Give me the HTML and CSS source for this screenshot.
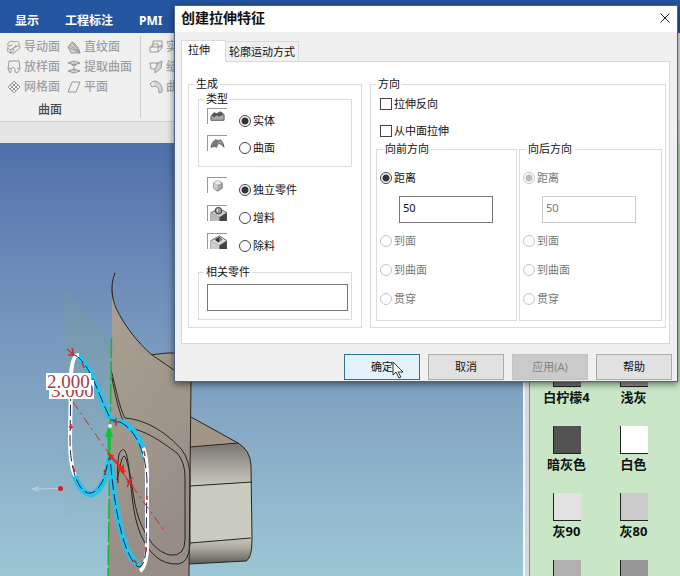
FILE: index.html
```html
<!DOCTYPE html>
<html lang="zh-CN">
<head>
<meta charset="utf-8">
<title>创建拉伸特征</title>
<link rel="stylesheet" href="styles.css">
</head>
<body>
<div class="app">
  <nav class="menubar">
    <a href="#">显示</a>
    <a href="#">工程标注</a>
    <a href="#">PMI</a>
  </nav>

  <div class="ribbon">
    <section class="ribbon-group">
      <div class="tools">
        <button class="tool" disabled><svg viewBox="0 0 14 14"><path d="M5 5C-1 6-1 11 3 13c3 0 4-4 4-4M1 6C0 2 4 0 7 2M1 8c1 3 4 1 6 0s6-4 6-1-4 3-5 5-3 1-5 1M7 2c4-2 6 1 5 3M3 12c1-4 6-4 6-7"/></svg>导动面</button>
        <button class="tool" disabled><svg viewBox="0 0 14 14"><path class="shade" d="M1 7l4-5c4 2 7 6 8 11H4z"/><path d="M1 7l4-5c4 2 7 6 8 11H4zM1 7l12 6M3 5l10 8M5 2l8 11"/></svg>直纹面</button>
        <button class="tool" disabled><svg viewBox="0 0 14 14"><path d="M2 1h10l1 8-3 4-2-1c1-6-5-6-4 0l-1 1-2-4zM1 9l3-1M13 9l-3-1"/></svg>放样面</button>
        <button class="tool" disabled><svg viewBox="0 0 14 14"><path class="shade" d="M7 1l6 2-6 2-6-2zM7 9l6 2-6 2-6-2z"/><path d="M7 1l6 2-6 2-6-2zM7 9l6 2-6 2-6-2zM7 3v8M5 6l2-2 2 2"/></svg>提取曲面</button>
        <button class="tool" disabled><svg viewBox="0 0 14 14"><path d="M7 1l6 6-6 6-6-6zM5 3l6 6M3 5l6 6M9 3L3 9M11 5l-6 6"/></svg>网格面</button>
        <button class="tool" disabled><svg viewBox="0 0 14 14"><path d="M5 2h8L9 12H1z"/></svg>平面</button>
      </div>
      <div class="group-name">曲面</div>
    </section>
    <section class="ribbon-group ribbon-group--edit">
      <div class="tools">
        <button class="tool" disabled><svg viewBox="0 0 14 14"><path d="M4 1h9v6H9V4H4zM4 4v3M1 7h8v5H1zM1 7l3-2M9 7l4-2M9 12l4-4V5"/></svg>实</button>
        <button class="tool" disabled><svg viewBox="0 0 14 14"><path class="shade" d="M7 4l6-3-1 7-6 5z"/><path d="M1 3h8L6 9H2zM7 4l6-3-1 7-6 5V9"/></svg>缝</button>
        <button class="tool" disabled><svg viewBox="0 0 14 14"><path class="shade" d="M5 1c6 0 9 6 8 11l-3 1C10 8 8 5 5 6z"/><path d="M1 4l4-3c6 0 9 6 8 11l-3 1C10 8 8 5 3 7z"/></svg>曲</button>
      </div>
    </section>
  </div>
  <div class="strip"></div>

  <main class="workspace">
    <div class="viewport">
      <svg class="model" viewBox="0 143 523 433" preserveAspectRatio="xMinYMin slice">
        <defs>
          <linearGradient id="wall" x1="0" y1="0" x2="0.300" y2="1"><stop offset="0" stop-color="#aaa194"/><stop offset=".6" stop-color="#a0968b"/><stop offset="1" stop-color="#978c86"/></linearGradient>
          <linearGradient id="roundTop" x1="0" y1="0" x2="0" y2="1"><stop offset="0" stop-color="#77756f"/><stop offset=".7" stop-color="#b2b2a9"/><stop offset="1" stop-color="#c6c7bd"/></linearGradient>
          <linearGradient id="roundEnd" x1="0" y1="0" x2="0" y2="1"><stop offset="0" stop-color="#c4c6bc"/><stop offset=".4" stop-color="#aaa99f"/><stop offset="1" stop-color="#5c5b56"/></linearGradient>
          <linearGradient id="plane" x1="0" y1="0" x2="0" y2="1"><stop offset="0" stop-color="#79a57b" stop-opacity=".2"/><stop offset=".5" stop-color="#79a57b" stop-opacity=".12"/><stop offset="1" stop-color="#79a57b" stop-opacity="0"/></linearGradient>
        </defs>
        <path d="M150 355l17-2h20v40z" fill="#a1978d" stroke="#29251f"/>
        <path d="M190 417l48 26-48 5z" fill="#a29689"/>
        <path d="M190 447l48-4q12 7 13 22l1 17-62 4z" fill="url(#roundTop)"/>
        <path d="M190 486l62-4v57l-62 4z" fill="#c9cbc1"/>
        <path d="M190 543l62-5q0 21-6 23l-57 3z" fill="url(#roundEnd)"/>
        <g class="edge"><path d="M191 417l47 26q12 7 13 22l1 74q0 20-6 22l-57 3M190 447l48-4M190 486l62-4M190 543l61-5"/></g>
        <path d="M115 273C109 288 113 300 116 308C124 325 137 342 152 355L174 370L191 382L189 576H108L112 345V295Z" fill="url(#wall)"/>
        <path d="M115 273q-4 15-1 31l-2-8q-1-13 3-23z" fill="#555c68"/>
        <g class="edge">
          <path d="M115 273C109 288 113 300 116 308C124 325 137 342 152 355L174 370M191 381L189 576"/>
          <path d="M111 370C116 388 119 407 125 418C148 420 168 434 182 450Q190 461 190 478V544Q189 563 178 564C160 565 150 552 145 543C133 524 132 493 129 470Q126 440 119 454Q117 465 118 483"/>
          <path d="M112 378C115 394 119 414 126 427C147 431 159 440 177 453Q185 462 185 477V539Q185 557 170 555C153 551 145 534 139 519C132 498 133 482 127 462Q124 450 121 462L117 480"/>
        </g>
        <path d="M64 288L111 342L109 555L63 510Z" fill="url(#plane)"/>
        <path d="M111.500 338L108 576" stroke="#27ad39" stroke-width="1.500" stroke-dasharray="20 3" fill="none"/>
        <g class="sketch-cyan">
          <path d="M75 354C91 364 98 394 110 418"/>
          <path d="M74 474C80 491 88 498 96 492C104 486 108 470 110 455C112 486 118 530 128 552Q134 563 140 565"/>
          <path d="M111 421C127 418 141 436 145 457"/>
        </g>
        <g class="sketch-white">
          <path d="M79 355Q72 355 71 375L70 440Q70 464 75 476"/>
          <path d="M143 448Q147 456 147 480V549Q146 567 140 571"/>
        </g>
        <g class="sketch-dash">
          <path d="M75 355C91 365 98 394 110 418M71 375L70 440C70 484 89 512 104 478L110 455C112 486 118 530 128 552Q142 583 146 550L147 480C145 440 127 420 111 420"/>
        </g>
        <g class="construction">
          <path d="M73 402L110 455M110 455L163 529" stroke-dasharray="9 4 2 4"/>
          <path d="M67 349l7 6M72 348l2 8M68 355h5M82 362l2 6M113 422h7M116 418v8M69 427h4M71 424v5M73 466l2 6M104 470l2 5M144 451l1 5M147 496v4M146 547v5M134 560l3 4" stroke-width="1.500"/>
          <path d="M126 478l7 8M132 477l-5 10M127 482h5" stroke-width="1.500"/>
        </g>
        <path d="M109 455V434" stroke="#12c431" stroke-width="3"/>
        <path d="M109 424l-4 13h8z" fill="#12c431"/>
        <path d="M108 453l17 19" stroke="#f3230f" stroke-width="2"/>
        <path d="M108 454l6 1-3 5zM124 475l-6-6 6-5z" fill="#f3230f"/>
        <circle cx="110" cy="426" r="2" fill="#e9f6ee"/>
        <path d="M60 488.500L33 489M39 487l-7 2 7 2" stroke="#bed3dd" fill="none"/>
        <circle cx="60.500" cy="488.500" r="2.500" fill="#d61c24"/>
        <rect x="49" y="380" width="45" height="19" fill="#fff"/>
        <text class="dimension" x="51" y="397">3.000</text>
        <rect x="46" y="373" width="45" height="17" fill="#fff"/>
        <text class="dimension" x="47" y="388">2.000</text>
      </svg>
    </div>
    <div class="splitter"></div>
    <aside class="palette">
      <figure><div class="swatch lemon"></div><figcaption>白柠檬4</figcaption></figure>
      <figure><div class="swatch light"></div><figcaption>浅灰</figcaption></figure>
      <figure><div class="swatch dark"></div><figcaption>暗灰色</figcaption></figure>
      <figure><div class="swatch white"></div><figcaption>白色</figcaption></figure>
      <figure><div class="swatch gray90"></div><figcaption>灰90</figcaption></figure>
      <figure><div class="swatch gray80"></div><figcaption>灰80</figcaption></figure>
      <figure><div class="swatch gray70"></div></figure>
      <figure><div class="swatch gray60"></div></figure>
    </aside>
  </main>
</div>

<form class="dialog" role="dialog" aria-labelledby="dialog-title">
  <header class="titlebar">
    <h1 id="dialog-title">创建拉伸特征</h1>
    <button type="button" class="close" aria-label="关闭"><svg viewBox="0 0 10 10"><path d="M.5.5l9 9M9.500.5l-9 9"/></svg></button>
  </header>
  <div class="tabs" role="tablist">
    <button type="button" class="tab tab--active" role="tab" aria-selected="true">拉伸</button>
    <button type="button" class="tab" role="tab" aria-selected="false">轮廓运动方式</button>
  </div>
  <div class="panel">
    <fieldset class="generate">
      <legend>生成</legend>
      <fieldset class="kind">
        <legend>类型</legend>
        <div class="option">
          <svg class="thumb" viewBox="0 0 20 16"><path d="M3 12V8l3-4 3 1 4-2 4 3v6z" fill="#aaa" stroke="#555"/><path d="M4 7l3-3 3 1 4-2 2 3-4 2-3-1-3 2z" fill="#555"/></svg>
          <label class="choice"><input type="radio" name="kind" checked>实体</label>
        </div>
        <div class="option">
          <svg class="thumb" viewBox="0 0 20 16"><path d="M3 12q1-6 5-8l3 1 2-1q3 2 4 8l-3-3q-2-2-4 0l-1 3-2-1z" fill="#999" stroke="#555"/><path d="M8 4l3 1-2 6-5 1z" fill="#777"/></svg>
          <label class="choice"><input type="radio" name="kind">曲面</label>
        </div>
      </fieldset>
      <div class="operations">
        <div class="option">
          <svg class="thumb" viewBox="0 0 20 16"><path d="M10 3l5 2v6l-5 3-4-3V5z" fill="#aaa" stroke="#777"/><path d="M10 3l5 2-5 2-4-2z" fill="#eee"/><path d="M6 5l4 2v6l-4-2z" fill="#ccc"/></svg>
          <label class="choice"><input type="radio" name="operation" checked>独立零件</label>
        </div>
        <div class="option">
          <svg class="thumb" viewBox="0 0 20 16"><path d="M3 7l9-4 8 4v9H3z" fill="#ccc" stroke="#666"/><path d="M3 7l9 5 8-5v9h-8z" fill="#444"/><path d="M3 7l9 5v4H3z" fill="#bbb"/><circle cx="11" cy="5" r="3.500" fill="#999" stroke="#333"/><path d="M10 3v3" stroke="#eee"/></svg>
          <label class="choice"><input type="radio" name="operation">增料</label>
        </div>
        <div class="option">
          <svg class="thumb" viewBox="0 0 20 16"><path d="M3 7l9-5 8 5v9H3z" fill="#ddd" stroke="#666"/><path d="M3 7l9 5 8-5v9h-8z" fill="#444"/><path d="M3 7l9 5v4H3z" fill="#ccc"/><path d="M7 6l5-3 3 3-4 3z" fill="#333"/><path d="M12 4l2 2-2 2z" fill="#aaa"/></svg>
          <label class="choice"><input type="radio" name="operation">除料</label>
        </div>
      </div>
      <fieldset class="related">
        <legend>相关零件</legend>
        <input type="text" aria-label="相关零件">
      </fieldset>
    </fieldset>

    <fieldset class="direction">
      <legend>方向</legend>
      <div class="checks">
        <label class="choice"><input type="checkbox">拉伸反向</label>
        <label class="choice"><input type="checkbox">从中面拉伸</label>
      </div>
      <div class="sides">
        <fieldset class="side">
          <legend>向前方向</legend>
          <label class="choice"><input type="radio" name="forward" checked>距离</label>
          <input class="distance" type="text" value="50" aria-label="向前距离">
          <div class="targets">
            <label class="choice"><input type="radio" name="forward" disabled>到面</label>
            <label class="choice"><input type="radio" name="forward" disabled>到曲面</label>
            <label class="choice"><input type="radio" name="forward" disabled>贯穿</label>
          </div>
        </fieldset>
        <fieldset class="side">
          <legend>向后方向</legend>
          <label class="choice"><input type="radio" name="backward" checked disabled>距离</label>
          <input class="distance" type="text" value="50" aria-label="向后距离" disabled>
          <div class="targets">
            <label class="choice"><input type="radio" name="backward" disabled>到面</label>
            <label class="choice"><input type="radio" name="backward" disabled>到曲面</label>
            <label class="choice"><input type="radio" name="backward" disabled>贯穿</label>
          </div>
        </fieldset>
      </div>
    </fieldset>
  </div>
  <footer class="actions">
    <button type="button" class="action action--default">确定<svg class="pointer" viewBox="0 0 12 18"><path d="M1 1v13l3-3 3 6 2-1-3-5h5z"/></svg></button>
    <button type="button" class="action">取消</button>
    <button type="button" class="action" disabled>应用(A)</button>
    <button type="button" class="action">帮助</button>
  </footer>
</form>
</body>
</html>
```

FILE: styles.css
```css
* { box-sizing: border-box; }

body {
  margin: 0;
  overflow: hidden;
  font: 11px/14px "Noto Sans", "Noto Sans CJK SC", sans-serif;
  color: #111;
}

button, input { font: inherit; color: inherit; }
a { color: inherit; text-decoration: none; }
h1, figure, fieldset { margin: 0; }

.app {
  display: flex;
  flex-direction: column;
  height: 100vh;
}

/* Menu and ribbon */
.menubar {
  display: flex;
  gap: 26px;
  padding: 13px 15px 4px;
  background: #2456a0;
  color: #fff;
  font-size: 12px;
  font-weight: 700;
  line-height: 16px;
}

.ribbon {
  display: flex;
  padding: 3px 0;
  border-bottom: 1px solid #cfcfcf;
  background: #f0f0f0;
}

.ribbon-group {
  padding: 3px 8px 0 7px;
  border-right: 1px solid #cdcdcd;
}

.ribbon-group--edit { padding-left: 8px; border: 0; }

.tools {
  display: grid;
  grid-template-columns: auto auto;
  column-gap: 7px;
  row-gap: 4px;
}

.ribbon-group--edit .tools { grid-template-columns: auto; }

.tool {
  display: flex;
  align-items: center;
  gap: 3px;
  padding: 0;
  border: 0;
  background: none;
  color: #a0a0a0;
  font-size: 12px;
  font-weight: 500;
  line-height: 16px;
  white-space: nowrap;
}

.tool svg { width: 14px; height: 14px; fill: none; stroke: #999; }
.tool .shade { fill: #d4d4d4; stroke: none; }

.group-name {
  padding: 7px 0 0 31px;
  color: #4a4a4a;
  font-size: 12px;
  font-weight: 500;
  line-height: 16px;
}

.strip { height: 21px; background: #e5e5e5; }

/* Workspace */
.workspace {
  display: grid;
  grid-template-columns: 1fr 7px 150px;
  flex: 1;
  min-height: 0;
}

.viewport {
  min-height: 0;
  overflow: hidden;
  background: linear-gradient(#4f6faa, #6988b7 26%, #84a6c4 62%, #9cc7d4);
}

.model { display: block; width: 100%; height: 100%; }
.edge { fill: none; stroke: #29251f; }
.sketch-cyan { fill: none; stroke: #24c4ea; stroke-width: 6; }
.sketch-white { fill: none; stroke: #fff; stroke-width: 4; }
.sketch-dash { fill: none; stroke: #192452; stroke-dasharray: 11 4; }
.construction { fill: none; stroke: #cc2a2e; }
.dimension { fill: #a03f3f; font: 19px "Liberation Serif", serif; }

.splitter {
  border-right: 1px solid #828b88;
  border-left: 2px solid #f2f5f8;
  background: #d5d9df;
}

.palette {
  display: grid;
  grid-template-columns: 67px 67px;
  grid-auto-rows: 67px;
  align-content: start;
  padding: 216px 0 0 3px;
  overflow: hidden;
  background: #c9e7c7;
  color: #111;
  font-size: 13px;
  font-weight: 700;
  line-height: 20px;
  text-align: center;
}

.swatch {
  width: 28px;
  height: 28px;
  margin: 0 auto;
  border: solid #222;
  border-width: 0 0 1px 1px;
}

.lemon { background: #727272; }
.light { background: #929292; }
.dark { background: #535353; }
.white { background: #fff; }
.gray90 { background: #e3e3e3; }
.gray80 { background: #cacaca; }
.gray70 { background: #b0b0b0; }
.gray60 { background: #979797; }

/* Dialog */
.dialog {
  position: absolute;
  top: 5px;
  right: 2px;
  left: 174px;
  border: 1px solid #506480;
  background: #f0f0f0;
  box-shadow: 0 2px 7px rgba(0, 0, 0, .55);
}

.titlebar {
  display: flex;
  align-items: center;
  justify-content: space-between;
  height: 26px;
  padding: 0 7px 2px 6px;
  background: #fff;
}

.titlebar h1 { font-size: 14px; line-height: 20px; }

.close {
  display: flex;
  padding: 0;
  border: 0;
  background: none;
}

.close svg { width: 10px; height: 10px; stroke: #222; }

.tabs {
  display: flex;
  align-items: flex-end;
  padding: 8px 6px 0;
}

.tab {
  height: 20px;
  padding: 0 3px;
  border: 1px solid #d9d9d9;
  border-bottom: 0;
  border-left: 0;
  background: #f0f0f0;
}

.tab--active {
  height: 22px;
  margin-bottom: -1px;
  padding: 0 15px 3px 6px;
  border-left: 1px solid #d9d9d9;
  background: #fff;
}

.panel {
  display: grid;
  grid-template-columns: 174fr 296fr;
  gap: 8px;
  margin: 0 7px 0 6px;
  padding: 15px 3px 15px 6px;
  border: 1px solid #d9d9d9;
  background: #fff;
}

fieldset {
  min-width: 0;
  padding: 0;
  border: 1px solid #dcdcdc;
}

legend { height: 14px; margin-left: 5px; padding: 0 2px; }

.generate { padding: 1px 9px 7px; }
.generate > legend { margin-left: -4px; }

.kind {
  display: grid;
  gap: 7px;
  padding: 2px 8px 11px;
}

.kind legend, .related legend { margin-left: -3px; }

.operations { display: grid; gap: 8px; margin: 10px 9px 12px; }

.option { display: flex; gap: 12px; height: 20px; }

.thumb {
  width: 20px;
  height: 16px;
  border-top: 1px solid #999;
  border-left: 1px solid #999;
}

.option .choice { margin-top: 6px; }

.related { padding: 5px 3px 8px 8px; }

input[type="text"] {
  display: block;
  height: 27px;
  padding: 0 3px 5px;
  border: 1px solid #777;
  border-radius: 0;
  background: #fff;
  outline: 0;
}

.related input[type="text"] { width: 100%; }

.choice {
  display: flex;
  align-items: center;
  gap: 2px;
  height: 14px;
  white-space: nowrap;
}

input[type="radio"], input[type="checkbox"] {
  flex: none;
  width: 12px;
  height: 12px;
  margin: 0;
  border: 1px solid #444;
  background: #fff;
  appearance: none;
}

input[type="radio"] { border-radius: 50%; }
input[type="radio"]:checked { background: radial-gradient(circle, #333 3px, #fff 4px); }
input[type="radio"]:disabled { border-color: #c6c6c6; }
input[type="radio"]:checked:disabled { background: radial-gradient(circle, #bbb 3px, #fff 4px); }
.choice:has(:disabled) { color: #777; }

.direction { padding: 6px 3px 5px 5px; }
.direction > legend { margin-left: 0; }
.checks { display: grid; gap: 13px; margin: 0 4px 4px; }
.sides { display: grid; grid-template-columns: 141fr 143fr; gap: 2px; }
.side { padding: 15px 3px 14px; }
.side legend { margin-left: 3px; }
.side .distance { width: 94px; margin: 11px 0 11px 19px; }
.side .distance:disabled { border-color: #ccc; color: #777; }
.targets { display: grid; gap: 15px; }

.actions {
  display: flex;
  justify-content: flex-end;
  gap: 8px;
  padding: 10px 5px 1px;
}

.action {
  position: relative;
  width: 76px;
  height: 26px;
  padding: 0;
  border: 1px solid #adadad;
  background: #e1e1e1;
}

.action--default { border: 1px solid #2c7396; background: #e3f1fb; }
.action:disabled { border-color: #c2c2c2; background: #cacaca; color: #858585; }

.pointer {
  position: absolute;
  top: 6px;
  left: 47px;
  width: 12px;
  height: 18px;
  fill: #fff;
  stroke: #333;
}
```
